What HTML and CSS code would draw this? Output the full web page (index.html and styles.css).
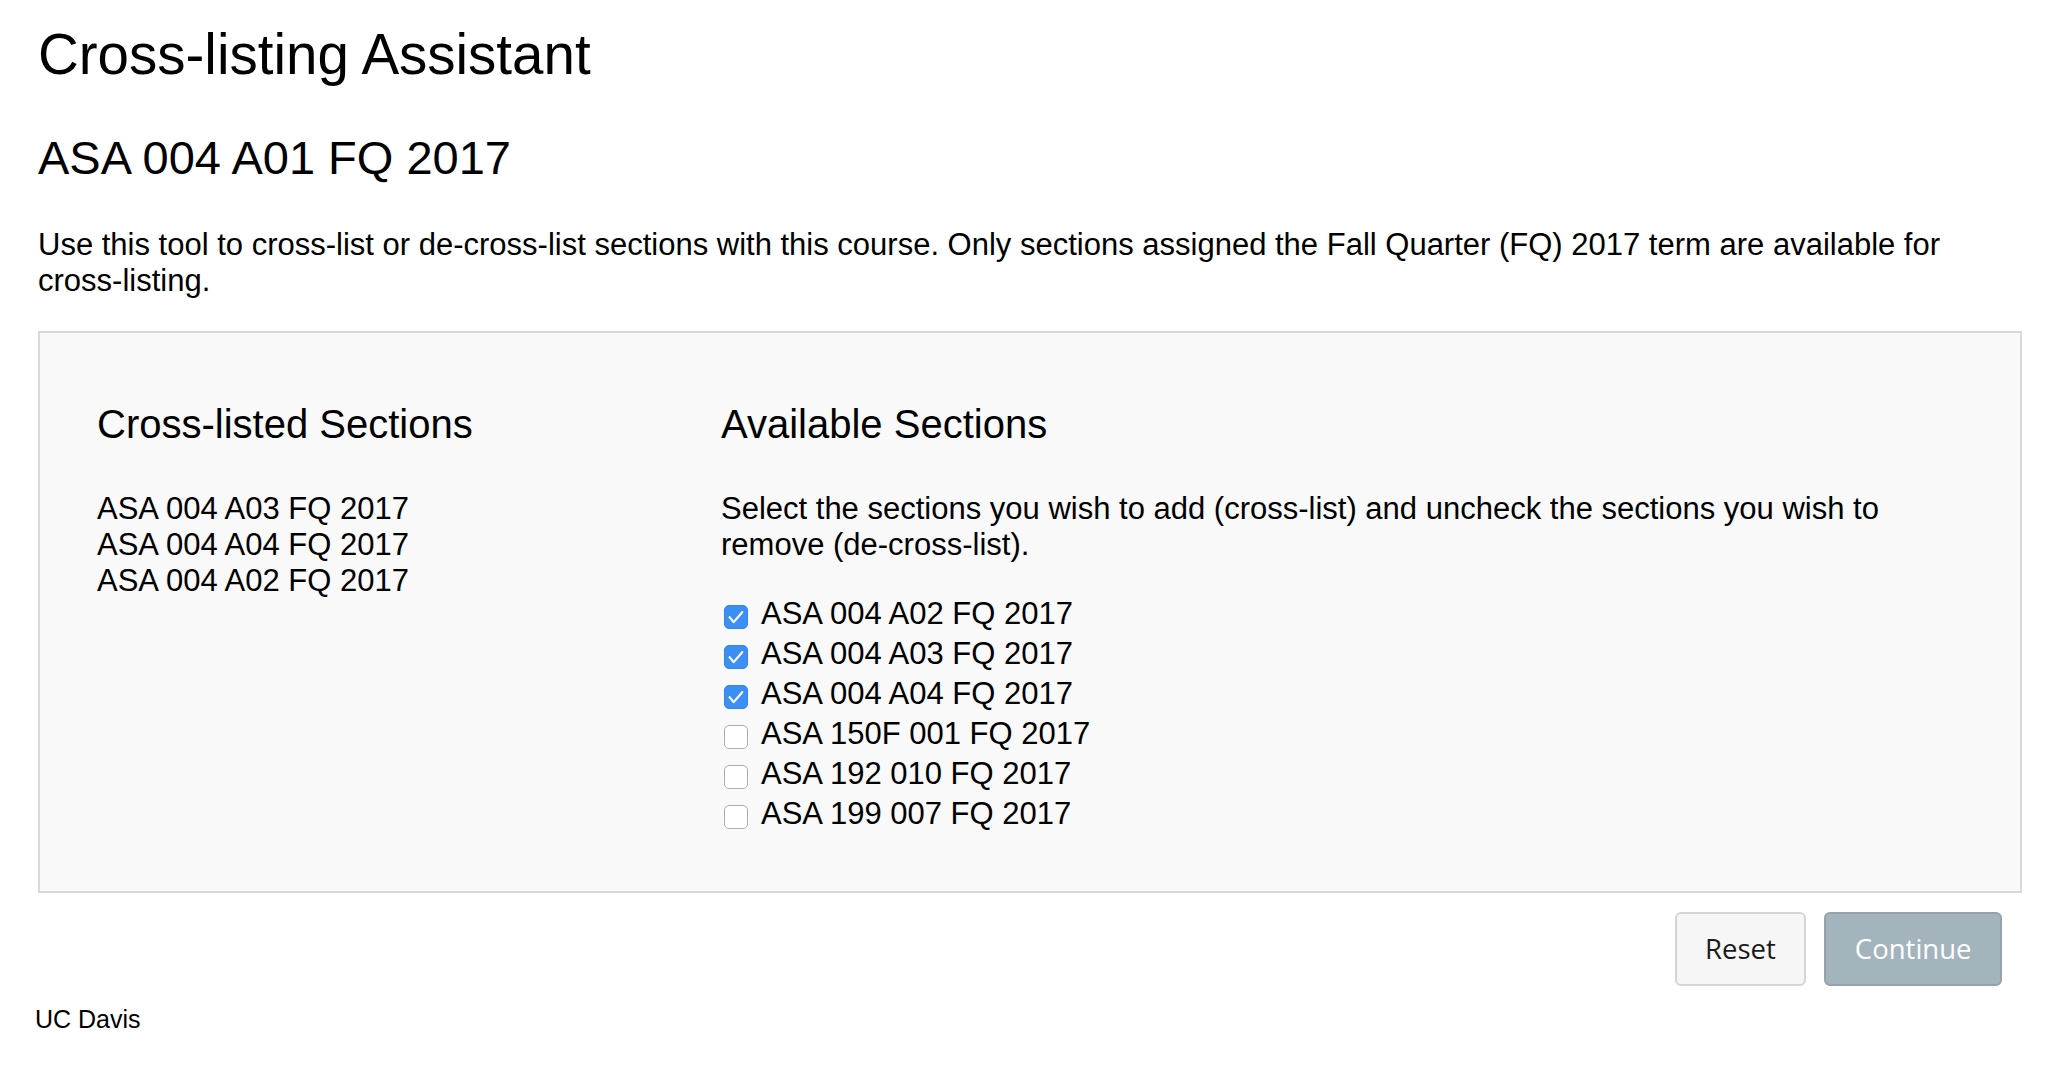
FILE: index.html
```html
<!DOCTYPE html>
<html lang="en">
<head>
<meta charset="utf-8">
<title>Cross-listing Assistant</title>
<link rel="stylesheet" href="styles.css">
</head>
<body>
<main class="page">
  <h1 class="title">Cross-listing Assistant</h1>
  <h2 class="course">ASA 004 A01 FQ 2017</h2>
  <p class="intro">Use this tool to cross-list or de-cross-list sections with this course. Only sections assigned the Fall Quarter (FQ) 2017 term are available for cross-listing.</p>

  <section class="panel">
    <div class="col col-left">
      <h3 class="col-title">Cross-listed Sections</h3>
      <ul class="listed">
        <li>ASA 004 A03 FQ 2017</li>
        <li>ASA 004 A04 FQ 2017</li>
        <li>ASA 004 A02 FQ 2017</li>
      </ul>
    </div>
    <div class="col col-right">
      <h3 class="col-title">Available Sections</h3>
      <p class="help">Select the sections you wish to add (cross-list) and uncheck the sections you wish to remove (de-cross-list).</p>
      <div class="options">
        <label class="option"><span class="box checked"><svg viewBox="0 0 24 24" width="24" height="24"><path d="M5.5 12.2 L9.6 17.2 L18.4 7" fill="none" stroke="#fff" stroke-width="2.1" stroke-linecap="round" stroke-linejoin="round"/></svg></span><span class="opt-text">ASA 004 A02 FQ 2017</span></label>
        <label class="option"><span class="box checked"><svg viewBox="0 0 24 24" width="24" height="24"><path d="M5.5 12.2 L9.6 17.2 L18.4 7" fill="none" stroke="#fff" stroke-width="2.1" stroke-linecap="round" stroke-linejoin="round"/></svg></span><span class="opt-text">ASA 004 A03 FQ 2017</span></label>
        <label class="option"><span class="box checked"><svg viewBox="0 0 24 24" width="24" height="24"><path d="M5.5 12.2 L9.6 17.2 L18.4 7" fill="none" stroke="#fff" stroke-width="2.1" stroke-linecap="round" stroke-linejoin="round"/></svg></span><span class="opt-text">ASA 004 A04 FQ 2017</span></label>
        <label class="option"><span class="box"></span><span class="opt-text">ASA 150F 001 FQ 2017</span></label>
        <label class="option"><span class="box"></span><span class="opt-text">ASA 192 010 FQ 2017</span></label>
        <label class="option"><span class="box"></span><span class="opt-text">ASA 199 007 FQ 2017</span></label>
      </div>
    </div>
  </section>

  <div class="actions">
    <button class="btn btn-reset" type="button">Reset</button>
    <button class="btn btn-continue" type="button">Continue</button>
  </div>
</main>
<footer class="footer">UC Davis</footer>
</body>
</html>
```

FILE: styles.css
```css
html, body {
  margin: 0;
  padding: 0;
  background: #ffffff;
}

body {
  font-family: "Liberation Sans", Arial, Helvetica, sans-serif;
  color: #000000;
  font-size: 31px;
  line-height: 36px;
}

.page {
  padding: 0 46px 0 38px;
}

.title {
  font-size: 56.5px;
  line-height: 66px;
  font-weight: normal;
  margin: 22px 0 0;
}

.course {
  font-size: 47px;
  line-height: 56px;
  font-weight: normal;
  margin: 42px 0 0;
}

.intro {
  margin: 41px 0 0;
}

.panel {
  margin-top: 32px;
  border: 2px solid #d9d9d9;
  background: #f9f9f9;
  display: grid;
  grid-template-columns: 624px 1fr;
  padding: 69px 60px 57px 57px;
}

.col-title {
  font-size: 40px;
  line-height: 44px;
  font-weight: normal;
  margin: 0;
}

.listed {
  list-style: none;
  margin: 45px 0 0;
  padding: 0;
}

.help {
  margin: 45px 0 0;
}

.options {
  margin-top: 31px;
  display: flex;
  flex-direction: column;
}

.option {
  display: flex;
  align-items: flex-start;
  line-height: 40px;
  height: 40px;
}

.box {
  width: 22px;
  height: 22px;
  margin: 11px 13px 0 3px;
  border: 1px solid #adadad;
  border-radius: 5px;
  background: #ffffff;
  flex: none;
  position: relative;
}

.box.checked {
  background: #3b8ff4;
  border-color: #3585e8;
}

.box svg {
  position: absolute;
  left: -1px;
  top: -1px;
}

.actions {
  display: flex;
  justify-content: flex-end;
  gap: 18px;
  margin-top: 19px;
  padding-right: 20px;
}

.btn {
  font-family: "Open Sans", "Liberation Sans", Arial, sans-serif;
  font-size: 27.5px;
  line-height: 38px;
  padding: 16px 28.5px;
  border-radius: 6px;
  border: 2px solid #d5d5d5;
  cursor: pointer;
}

.btn-reset {
  background: #f6f6f6;
  color: #1a1a1a;
}

.btn-continue {
  background: #a4b4bd;
  border-color: #96a2a9;
  color: #ffffff;
}

.footer {
  font-size: 25px;
  line-height: 28px;
  margin: 19px 0 0 35px;
}
```
